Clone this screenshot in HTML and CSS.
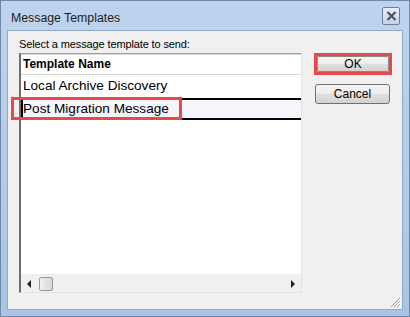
FILE: index.html
```html
<!DOCTYPE html>
<html>
<head>
<meta charset="utf-8">
<link rel="stylesheet" href="styles.css">
</head>
<body>
<div class="window">
  <div class="titlebar">
    <span class="title">Message Templates</span>
    <button class="close" aria-label="Close">
      <svg width="11" height="10" viewBox="0 0 11 10"><path d="M1.5 1 L9.5 9 M9.5 1 L1.5 9" stroke="#4a5563" stroke-width="2.2" fill="none"/></svg>
    </button>
  </div>
  <div class="client">
    <div class="left">
      <div class="label">Select a message template to send:</div>
      <div class="listbox">
        <div class="header">Template Name</div>
        <div class="row">Local Archive Discovery</div>
        <div class="row selected">Post Migration Message<span class="mark"></span></div>
        <div class="filler"></div>
        <div class="hscroll">
          <span class="arrow left-arrow"></span>
          <span class="thumb"></span>
          <span class="track"></span>
          <span class="arrow right-arrow"></span>
        </div>
      </div>
    </div>
    <div class="right">
      <div class="ok-mark"><button class="btn">OK</button></div>
      <button class="btn cancel">Cancel</button>
    </div>
    <div class="grip">
      <svg width="12" height="12" viewBox="0 0 12 12"><path d="M11 2 L2 11 M11 5 L5 11 M11 8 L8 11" stroke="#a0a0a0" stroke-width="1" fill="none"/><path d="M12 3 L3 12 M12 6 L6 12 M12 9 L9 12" stroke="#ffffff" stroke-width="1" fill="none"/></svg>
    </div>
  </div>
</div>
</body>
</html>
```
FILE: styles.css
```css
html, body {
  margin: 0;
  padding: 0;
  background: #ffffff;
}
.window {
  width: 410px;
  height: 317px;
  box-sizing: border-box;
  border: 1px solid #6f89a8;
  background: linear-gradient(#bed4ee, #a9c4e4);
  display: flex;
  flex-direction: column;
  padding: 0 6px 6px 6px;
  font-family: "Liberation Sans", Arial, sans-serif;
}
.titlebar {
  height: 29px;
  display: flex;
  align-items: center;
  justify-content: space-between;
  flex-shrink: 0;
}
.title {
  font-family: "Liberation Sans", Arial, sans-serif;
  font-size: 12.3px;
  color: #1e1e1e;
  padding-left: 4px;
  padding-top: 4px;
}
.close {
  width: 18px;
  height: 18px;
  margin-right: 3px;
  margin-top: 1px;
  padding: 0;
  border: 1px solid #6e7f95;
  border-radius: 2px;
  background: linear-gradient(#e6eef8, #c4d3e6);
  display: flex;
  align-items: center;
  justify-content: center;
}
.client {
  flex: 1;
  background: #f0f0f0;
  border: 1px solid #91a9c6;
  display: flex;
  position: relative;
}
.left {
  padding-left: 11px;
  padding-top: 7px;
  display: flex;
  flex-direction: column;
}
.label {
  font-size: 11px;
  letter-spacing: -0.12px;
  color: #000;
  height: 15px;
  line-height: 12px;
}
.listbox {
  width: 283px;
  height: 240px;
  box-sizing: border-box;
  background: #ffffff;
  border-top: 1px solid #a0a0a0;
  border-left: 2px solid #6e6e6e;
  border-right: 1px solid #e3e3e3;
  border-bottom: 1px solid #e3e3e3;
  display: flex;
  flex-direction: column;
  box-shadow: inset 0 1px 0 #d8d8d8;
}
.header {
  height: 21px;
  box-sizing: border-box;
  border-bottom: 1px solid #d5d5d5;
  font-weight: bold;
  font-size: 12px;
  line-height: 21px;
  padding-left: 2px;
  color: #000;
}
.row {
  height: 23px;
  box-sizing: border-box;
  font-size: 13.6px;
  line-height: 22px;
  padding-left: 2px;
  color: #000;
  position: relative;
}
.row.selected {
  height: 22px;
  background: #f5f5fb;
  border-top: 2px solid #000;
  border-bottom: 2px solid #000;
  border-left: 2px solid #000;
  line-height: 18px;
  padding-left: 0;
}
.mark {
  position: absolute;
  left: -12px;
  top: -3px;
  width: 171px;
  height: 23px;
  box-sizing: border-box;
  border: 3px solid #e84a4c;
}
.filler {
  flex: 1;
}
.hscroll {
  height: 17px;
  display: flex;
  align-items: center;
  background: #f0f0f0;
  border-top: 1px solid #ececec;
}
.arrow {
  width: 0;
  height: 0;
  border-top: 4px solid transparent;
  border-bottom: 4px solid transparent;
}
.left-arrow {
  margin-left: 6px;
  border-right: 4px solid #202020;
}
.right-arrow {
  margin-right: 6px;
  border-left: 4px solid #202020;
}
.thumb {
  width: 14px;
  height: 14px;
  margin-left: 8px;
  box-sizing: border-box;
  border: 1px solid #9a9a9a;
  border-radius: 2px;
  background: linear-gradient(90deg, #f2f2f2, #d6d6d6);
}
.track {
  flex: 1;
}
.right {
  display: flex;
  flex-direction: column;
  padding-left: 12px;
  padding-top: 22px;
  gap: 9px;
}
.ok-mark {
  border: 3px solid #e84a4c;
  width: 78px;
  height: 22px;
  box-sizing: border-box;
  display: flex;
  align-items: center;
  justify-content: center;
}
.btn {
  width: 75px;
  height: 20px;
  margin: 0;
  padding: 0;
  font-family: "Liberation Sans", Arial, sans-serif;
  font-size: 12px;
  color: #000;
  border: 1px solid #707070;
  border-radius: 3px;
  background: linear-gradient(#f4f4f4 0%, #ececec 50%, #e0e0e0 51%, #d2d2d2 100%);
}
.ok-mark .btn {
  width: 72px;
  height: 16px;
  border-color: #8a8a8a;
  border-radius: 1px;
}
.cancel {
  margin-left: 1px;
}
.grip {
  position: absolute;
  right: 1px;
  bottom: 1px;
  line-height: 0;
}
```
